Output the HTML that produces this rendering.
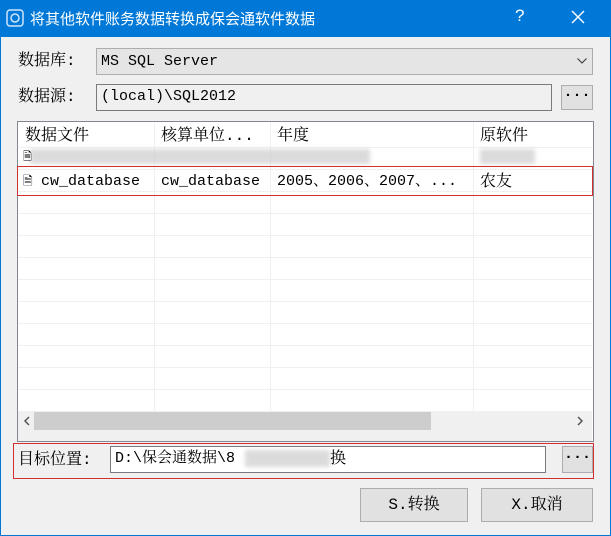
<!DOCTYPE html>
<html><head><meta charset="utf-8"><style>
*{margin:0;padding:0;box-sizing:border-box}
body{width:611px;height:536px;overflow:hidden;background:#0078d7;font-family:"Liberation Mono","Noto Serif CJK SC",monospace;font-size:15px;color:#000;position:relative}
.win{position:absolute;left:1px;top:37px;width:609px;height:498px;background:#f0f0f0}
.a{position:absolute;line-height:20px;white-space:nowrap}
.title{position:absolute;left:30px;top:8px;color:#fff;font-family:"Liberation Sans","Noto Sans CJK SC",sans-serif;font-size:15px}
.box{position:absolute;border:1px solid #7a7a7a;background:#fff;padding-left:4px;line-height:24px;white-space:nowrap}
.btn{position:absolute;border:1px solid #adadad;background:#e1e1e1;text-align:center}
.hl{position:absolute;left:18px;width:574px;height:1px;background:#f0f0f0}
.vl{position:absolute;top:122px;height:289px;width:1px;background:#f0f0f0}
.blur{position:absolute;background:#ccc;filter:blur(2px);opacity:.7}
</style></head><body>
<svg class="a" style="left:6px;top:9px" width="18" height="18"><rect x="1" y="1" width="16" height="16" rx="3" fill="none" stroke="#cfe6fb" stroke-width="1.5"/><circle cx="9" cy="9" r="4" fill="none" stroke="#cfe6fb" stroke-width="1.5"/></svg>
<div class="title">将其他软件账务数据转换成保会通软件数据</div>
<div class="a" style="left:515px;top:6px;color:#fff;font-family:'Liberation Sans';font-size:17px">?</div>
<svg class="a" style="left:571px;top:10px" width="14" height="14"><path d="M1 1L13 13M13 1L1 13" stroke="#fff" stroke-width="1.4"/></svg>
<div class="win"></div>
<div class="a" style="left:18px;top:51px;font-size:16px">数据库:</div>
<div class="box" style="left:96px;top:48px;width:497px;height:27px;background:#e5e5e5;border-color:#adadad;line-height:25px">MS SQL Server</div>
<svg class="a" style="left:577px;top:58px" width="10" height="6"><path d="M0.5 0.5L5 5L9.5 0.5" stroke="#333" fill="none"/></svg>
<div class="a" style="left:18px;top:87px;font-size:16px">数据源:</div>
<div class="box" style="left:96px;top:84px;width:456px;height:27px;background:#f0f0f0">(local)\SQL2012</div>
<div class="btn" style="left:561px;top:85px;width:32px;height:25px;line-height:20px;font-weight:bold">···</div>
<div class="box" style="left:17px;top:121px;width:577px;height:321px;padding:0;border-color:#828790"></div>
<div class="hl" style="top:147px"></div><div class="hl" style="top:169px"></div><div class="hl" style="top:191px"></div>
<div class="hl" style="top:213px"></div><div class="hl" style="top:235px"></div><div class="hl" style="top:257px"></div><div class="hl" style="top:279px"></div><div class="hl" style="top:301px"></div><div class="hl" style="top:323px"></div><div class="hl" style="top:345px"></div><div class="hl" style="top:367px"></div><div class="hl" style="top:389px"></div>
<div class="vl" style="left:154px"></div><div class="vl" style="left:270px"></div><div class="vl" style="left:473px"></div>
<div class="a" style="left:25px;top:126px;font-size:16px">数据文件</div>
<div class="a" style="left:161px;top:126px;font-size:16px">核算单位...</div>
<div class="a" style="left:277px;top:126px;font-size:16px">年度</div>
<div class="a" style="left:480px;top:126px;font-size:16px">原软件</div>
<div class="blur" style="left:30px;top:149px;width:340px;height:15px"></div>
<div class="blur" style="left:480px;top:149px;width:55px;height:15px"></div>
<div class="a" style="left:23px;top:148px;font-size:11px">🗎</div>
<div class="a" style="left:23px;top:172px;font-size:12px">🗎</div>
<div class="a" style="left:41px;top:172px">cw_database</div>
<div class="a" style="left:161px;top:172px">cw_database</div>
<div class="a" style="left:277px;top:172px">2005、2006、2007、...</div>
<div class="a" style="left:480px;top:172px;font-size:16px">农友</div>
<div class="a" style="left:17px;top:166px;width:576px;height:30px;border:1px solid #d03030"></div>
<div class="a" style="left:18px;top:411px;width:574px;height:30px;background:#f0f0f0"></div>
<div class="a" style="left:34px;top:412px;width:397px;height:18px;background:#cdcdcd"></div>
<svg class="a" style="left:23px;top:416px" width="8" height="10"><path d="M6 1L2 5L6 9" stroke="#555" stroke-width="1.5" fill="none"/></svg>
<svg class="a" style="left:576px;top:416px" width="8" height="10"><path d="M2 1L6 5L2 9" stroke="#555" stroke-width="1.5" fill="none"/></svg>
<div class="a" style="left:13px;top:443px;width:581px;height:36px;border:1px solid #d03030"></div>
<div class="a" style="left:18px;top:450px;font-size:16px">目标位置:</div>
<div class="box" style="left:110px;top:446px;width:436px;height:27px">D:\保会通数据\8</div>
<div class="blur" style="left:245px;top:450px;width:85px;height:17px"></div>
<div class="a" style="left:330px;top:449px;font-size:16px">换</div>
<div class="btn" style="left:562px;top:446px;width:31px;height:27px;line-height:22px;font-weight:bold">···</div>
<div class="btn" style="left:360px;top:488px;width:108px;height:34px;line-height:32px;font-size:16px">S.转换</div>
<div class="btn" style="left:481px;top:488px;width:112px;height:34px;line-height:32px;font-size:16px">X.取消</div>
</body></html>
